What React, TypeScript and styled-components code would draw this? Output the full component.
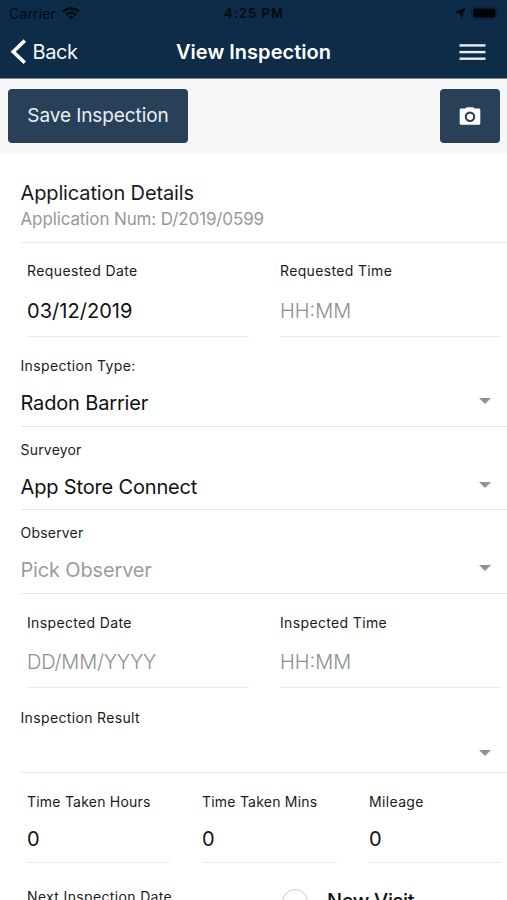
import React from 'react';
import styled, { createGlobalStyle } from 'styled-components';

const GlobalStyle = createGlobalStyle`
  * { box-sizing: border-box; }
  body {
    margin: 0;
    background: #fff;
    font-family: Inter, Roboto, sans-serif;
    color: #1a1a1a;
  }
`;

const Screen = styled.div`
  display: flex;
  flex-direction: column;
  width: 100%;
  height: 900px;
  overflow: hidden;
  background: #fff;
`;

const Header = styled.header`
  flex: none;
  height: 79px;
  background: #0e2b47;
  border-bottom: 1px solid #77869a;
`;

const StatusBar = styled.div`
  display: grid;
  grid-template-columns: 1fr auto 1fr;
  align-items: center;
  height: 26px;
  padding: 0 8px 0 9px;
  color: #020a12;
`;

const Carrier = styled.div`
  display: flex;
  align-items: center;
  gap: 6px;
  font-size: 14px;
  letter-spacing: 0.15px;
`;

const Clock = styled.div`
  font-size: 13px;
  font-weight: 600;
  letter-spacing: 1.05px;
`;

const StatusIcons = styled.div`
  display: flex;
  align-items: center;
  justify-content: flex-end;
  gap: 5px;
`;

const NavBar = styled.nav`
  display: grid;
  grid-template-columns: 1fr auto 1fr;
  align-items: center;
  height: 52px;
  padding: 0 10px;
  color: #fff;
`;

const BackButton = styled.button`
  display: flex;
  align-items: center;
  gap: 5.5px;
  padding: 0;
  border: 0;
  background: none;
  color: #f4f7fa;
  font: 400 20px/26px Inter, sans-serif;
  letter-spacing: -0.45px;
`;

const NavTitle = styled.h1`
  margin: 0;
  font-size: 20px;
  line-height: 26px;
  font-weight: 600;
  letter-spacing: 0.03px;
`;

const MenuButton = styled.button`
  display: flex;
  justify-self: end;
  margin-right: 11px;
  padding: 0;
  border: 0;
  background: none;
`;

const Toolbar = styled.div`
  display: flex;
  flex: none;
  align-items: flex-start;
  justify-content: space-between;
  height: 75px;
  padding: 9.5px 7.5px 0 8px;
  background: #f7f7f7;
`;

const ToolButton = styled.button<{ $width: number }>`
  display: flex;
  align-items: center;
  justify-content: center;
  width: ${(p) => p.$width}px;
  height: 54.5px;
  padding: 1px 0 0;
  border: 0;
  border-radius: 4px;
  background: #294158;
  color: #e9eff5;
  font: 400 19px/26px Inter, sans-serif;
  letter-spacing: -0.08px;
`;

const Details = styled.section`
  flex: none;
  height: 89px;
  margin-left: 20.5px;
  padding-top: 25px;
  border-bottom: 1px solid #e9e9e9;
`;

const DetailsTitle = styled.h2`
  margin: 0;
  font-size: 20px;
  line-height: 28px;
  font-weight: 400;
  letter-spacing: -0.13px;
`;

const DetailsSub = styled.p`
  margin: 0;
  font-size: 17px;
  line-height: 24px;
  letter-spacing: -0.12px;
  color: #989898;
`;

const Columns = styled.section<{ $template: string; $gap: string; $top?: number }>`
  display: grid;
  flex: none;
  grid-template-columns: ${(p) => p.$template};
  column-gap: ${(p) => p.$gap};
  padding: ${(p) => p.$top ?? 18}px 6px 0 27px;
`;

const InputField = styled.label<{ $gap: number; $bottom: number }>`
  display: flex;
  flex-direction: column;
  gap: ${(p) => p.$gap}px;
  padding-bottom: ${(p) => p.$bottom}px;
  border-bottom: 1px solid #ececec;
`;

const Label = styled.span<{ $tracking?: number }>`
  font-size: 14px;
  line-height: 20px;
  letter-spacing: ${(p) => p.$tracking ?? 0.35}px;
  white-space: nowrap;
`;

const Value = styled.span<{ $muted?: boolean; $light?: boolean; $tracking?: number }>`
  height: 28px;
  font-size: 20px;
  line-height: 28px;
  font-weight: ${(p) => (p.$light ? 300 : 400)};
  letter-spacing: ${(p) => p.$tracking ?? -0.16}px;
  color: ${(p) => (p.$light ? '#8e8e8e' : p.$muted ? '#9c9c9c' : '#111')};
  white-space: nowrap;
`;

const SelectField = styled.section<{ $height: number; $top: number }>`
  display: flex;
  flex: none;
  flex-direction: column;
  gap: 13px;
  height: ${(p) => p.$height}px;
  margin-left: 20.5px;
  padding: ${(p) => p.$top}px 15px 0 0;
  border-bottom: 1px solid #e6e6e6;
`;

const SelectLine = styled.div`
  display: flex;
  align-items: center;
  justify-content: space-between;
  height: 28px;
`;

const Caret = styled.span`
  width: 0;
  height: 0;
  margin: 0 1px 4px 0;
  border: 6px solid transparent;
  border-top-color: #929292;
  border-bottom: 0;
`;

const NextRow = styled.section`
  display: flex;
  flex: none;
  padding: 23px 0 0 27px;
`;

const NextLabel = styled.div`
  width: 255px;
`;

const RadioOption = styled.div`
  display: flex;
  align-items: center;
  gap: 19px;
  height: 27px;
  margin-top: 2px;
`;

const RadioText = styled.span`
  margin-bottom: 2px;
  font-size: 20px;
  line-height: 24px;
  font-weight: 500;
  letter-spacing: -0.35px;
  color: #111;
`;

const RadioCircle = styled.span`
  width: 26px;
  height: 26px;
  border: 1px solid #c9c9c9;
  border-radius: 50%;
`;

const WifiIcon = () => (
  <svg width="18" height="13" viewBox="0 0 18 13" fill="none" stroke="#020a12" strokeWidth="2.5">
    <path d="M1 4.6C5.6.3 12.4.3 17 4.6" />
    <path d="M4 7.8c2.8-2.6 7.2-2.6 10 0" />
    <path d="M9 12.6 6.2 9.9c1.6-1.5 4-1.5 5.6 0Z" fill="#020a12" stroke="none" />
  </svg>
);

const LocationIcon = () => (
  <svg width="12" height="12" viewBox="0 0 12 12" fill="#020a12">
    <path d="M11.8.4 7.2 11.6 6 6.6.3 5.6Z" />
  </svg>
);

const BatteryIcon = () => (
  <svg width="28" height="14" viewBox="0 0 28 14">
    <rect x="0.5" y="1" width="25" height="12" rx="3.5" fill="none" stroke="#0a2238" />
    <rect x="2" y="2.6" width="22.4" height="9" rx="1.8" fill="#000408" />
    <path d="M26.5 5v4c1.3-.6 1.3-3.4 0-4Z" fill="#08192a" />
  </svg>
);

const BackIcon = () => (
  <svg width="17" height="26" viewBox="0 0 17 26" fill="none" stroke="#fff" strokeWidth="3.6">
    <path d="M14.8 1.6 3.2 12.7l11.6 11.1" />
  </svg>
);

const MenuIcon = () => (
  <svg width="27" height="17" viewBox="0 0 27 17" fill="#e7edf6">
    <rect x="0.5" y="0.2" width="26" height="2.4" />
    <rect x="0.5" y="6.9" width="26" height="2.4" />
    <rect x="0.5" y="13.5" width="26" height="2.4" />
  </svg>
);

const CameraIcon = () => (
  <svg width="22" height="19" viewBox="0 0 22 19">
    <path
      d="M2.2 1.6h4.2L7.6.2h6.8l1.2 1.4h4.2c.9 0 1.5.6 1.5 1.5v13.2c0 .9-.6 1.5-1.5 1.5H2.2c-.9 0-1.5-.6-1.5-1.5V3.1c0-.9.6-1.5 1.5-1.5Z"
      fill="#fff"
    />
    <circle cx="11" cy="9.8" r="4.2" fill="none" stroke="#294158" strokeWidth="2.1" />
  </svg>
);

type InputProps = {
  label: string;
  value: string;
  muted?: boolean;
  tracking?: number;
  labelTracking?: number;
  gap?: number;
  bottom?: number;
};

const Input = ({ label, value, muted, tracking, labelTracking, gap = 16, bottom = 11 }: InputProps) => (
  <InputField $gap={gap} $bottom={bottom}>
    <Label $tracking={labelTracking}>{label}</Label>
    <Value $light={muted} $tracking={tracking}>{value}</Value>
  </InputField>
);

type SelectProps = {
  label: string;
  value?: string;
  placeholder?: string;
  height: number;
  top: number;
  labelTracking?: number;
};

const Select = ({ label, value, placeholder, height, top, labelTracking }: SelectProps) => (
  <SelectField $height={height} $top={top}>
    <Label $tracking={labelTracking}>{label}</Label>
    <SelectLine>
      <Value $muted={!value}>{value ?? placeholder}</Value>
      <Caret />
    </SelectLine>
  </SelectField>
);

export default function App() {
  return (
    <Screen>
      <GlobalStyle />
      <Header>
        <StatusBar>
          <Carrier>Carrier <WifiIcon /></Carrier>
          <Clock>4:25 PM</Clock>
          <StatusIcons><LocationIcon /><BatteryIcon /></StatusIcons>
        </StatusBar>
        <NavBar>
          <BackButton><BackIcon />Back</BackButton>
          <NavTitle>View Inspection</NavTitle>
          <MenuButton aria-label="Menu"><MenuIcon /></MenuButton>
        </NavBar>
      </Header>
      <Toolbar>
        <ToolButton $width={180}>Save Inspection</ToolButton>
        <ToolButton $width={59.5} aria-label="Camera"><CameraIcon /></ToolButton>
      </Toolbar>
      <Details>
        <DetailsTitle>Application Details</DetailsTitle>
        <DetailsSub>Application Num: D/2019/0599</DetailsSub>
      </Details>
      <Columns $template="222px 221px" $gap="31px">
        <Input label="Requested Date" value="03/12/2019" tracking={0.04} labelTracking={0.4} />
        <Input label="Requested Time" value="HH:MM" muted tracking={0} />
      </Columns>
      <Select label="Inspection Type:" value="Radon Barrier" height={90} top={19} />
      <Select label="Surveyor" value="App Store Connect" height={83} top={13} labelTracking={0.2} />
      <Select label="Observer" placeholder="Pick Observer" height={84} top={13} labelTracking={0.2} />
      <Columns $template="222px 221px" $gap="31px" $top={19}>
        <Input label="Inspected Date" value="DD/MM/YYYY" muted tracking={-0.2} gap={15} />
        <Input label="Inspected Time" value="HH:MM" muted tracking={0} gap={15} />
      </Columns>
      <Select label="Inspection Result" height={85} top={19.5} />
      <Columns $template="143px 135px 132px" $gap="32px" $top={19}>
        <Input label="Time Taken Hours" value="0" gap={13} bottom={9} labelTracking={0.22} />
        <Input label="Time Taken Mins" value="0" gap={13} bottom={9} labelTracking={0.22} />
        <Input label="Mileage" value="0" gap={13} bottom={9} />
      </Columns>
      <NextRow>
        <NextLabel><Label>Next Inspection Date</Label></NextLabel>
        <RadioOption><RadioCircle /><RadioText>New Visit</RadioText></RadioOption>
      </NextRow>
    </Screen>
  );
}
